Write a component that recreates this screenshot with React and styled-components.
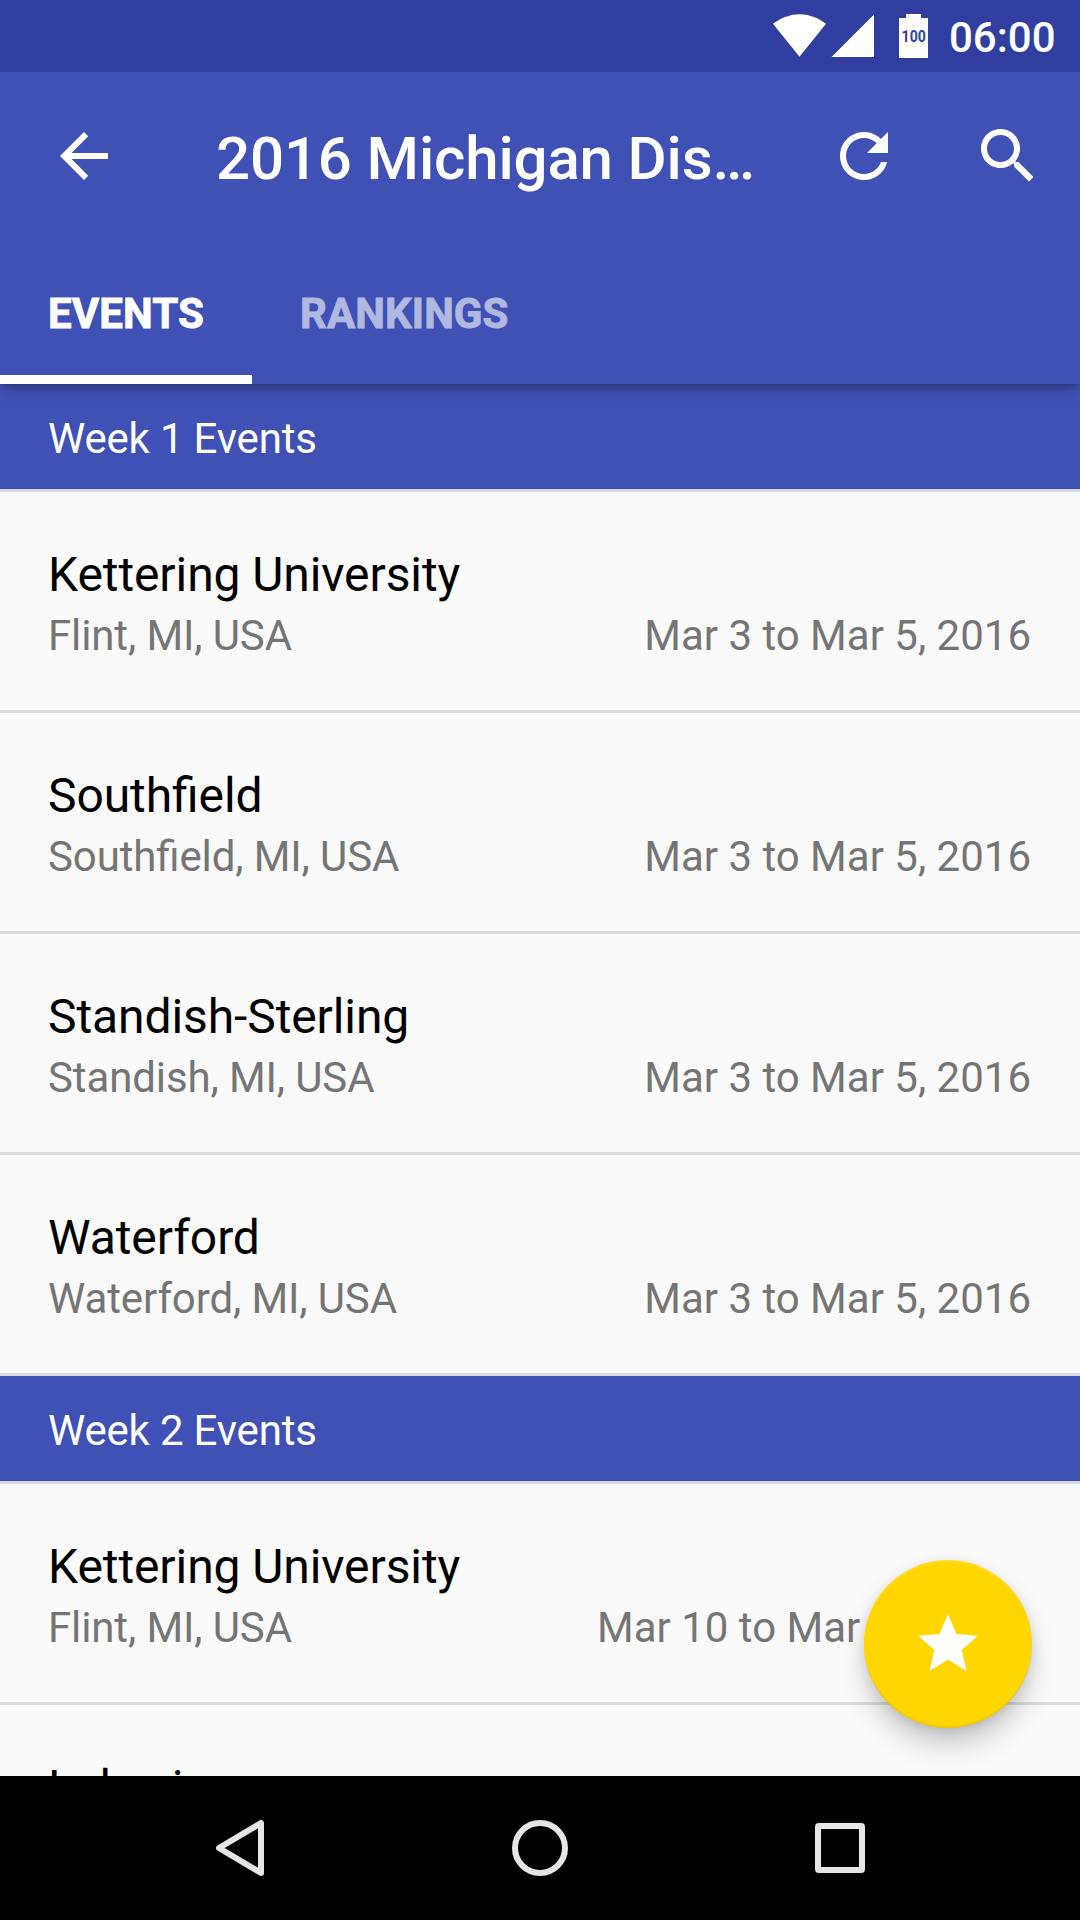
import React from "react";
import styled, { createGlobalStyle } from "styled-components";

const GlobalStyle = createGlobalStyle`
  * { box-sizing: border-box; }
  body { margin: 0; background: #fafafa; }
`;

const Screen = styled.div`
  position: relative;
  display: flex;
  flex-direction: column;
  width: 1080px;
  height: 1920px;
  overflow: hidden;
  background: #fafafa;
  font-family: Roboto, "Noto Sans", sans-serif;
  font-feature-settings: "liga" 1;
`;

const StatusBar = styled.div`
  display: flex;
  flex: none;
  justify-content: flex-end;
  height: 72px;
  padding-right: 24px;
  background: #303f9f;
  color: #fff;
`;

const StatusIcon = styled.svg`
  display: block;
  flex: none;
  width: ${(p) => p.$width}px;
  height: 72px;
  margin-right: ${(p) => p.$gap}px;
  overflow: visible;
`;

const Clock = styled.span`
  flex: none;
  width: 107px;
  padding-top: 13px;
  font-size: 42px;
  font-weight: 500;
  line-height: 49px;
  white-space: nowrap;
`;

const AppBar = styled.header`
  position: relative;
  z-index: 1;
  flex: none;
  background: #3f51b5;
  color: #fff;
  box-shadow: 0 6px 12px -2px rgba(0, 0, 0, 0.32), 0 1px 6px rgba(0, 0, 0, 0.12);
  clip-path: inset(0 0 -30px 0);
`;

const Toolbar = styled.div`
  display: flex;
  align-items: center;
  height: 168px;
  padding: 0 36px 0 48px;
`;

const Title = styled.h1`
  flex: 1;
  margin: 0;
  padding: 5px 0 0 96px;
  font-size: 60px;
  font-weight: 500;
  line-height: 70px;
  letter-spacing: -0.15px;
  white-space: nowrap;
`;

const Icon = styled.svg`
  display: block;
  flex: none;
  width: 72px;
  height: 72px;
  fill: currentColor;
`;

const Actions = styled.div`
  display: flex;
  gap: 72px;
`;

const Tabs = styled.nav`
  display: flex;
  height: 144px;
`;

const Tab = styled.div`
  padding: 49px 48px 0;
  border-bottom: 9px solid ${(p) => (p.$active ? "#fff" : "transparent")};
  color: ${(p) => (p.$active ? "#fff" : "#b2b9e1")};
  font-size: 42px;
  font-weight: 700;
  line-height: 49px;
  letter-spacing: 0.1px;
  -webkit-text-stroke: 0.9px currentColor;
`;

const List = styled.main`
  flex: 1;
  min-height: 0;
  overflow: hidden;
`;

const WeekHeader = styled.h2`
  height: 108px;
  margin: 0;
  padding: 30px 48px 0;
  border-bottom: 3px solid #dcdcdc;
  background: #3f51b5;
  color: #fff;
  font-size: 42px;
  font-weight: 400;
  line-height: 49px;
  letter-spacing: -0.19px;
`;

const EventRow = styled.article`
  height: 221px;
  padding: 55px 48px 0;
  border-bottom: 3px solid #dcdcdc;
`;

const EventName = styled.h3`
  margin: 0 0 8px;
  color: #000;
  font-size: 48px;
  font-weight: 400;
  line-height: 56px;
  letter-spacing: -0.09px;
`;

const EventDetails = styled.div`
  display: flex;
  justify-content: space-between;
  color: #757575;
  font-size: 42px;
  line-height: 49px;
  white-space: nowrap;
`;

const Place = styled.span`
  letter-spacing: -0.12px;
`;

const Dates = styled.span`
  margin-right: 1px;
`;

const Fab = styled.button`
  position: absolute;
  right: 48px;
  bottom: 192px;
  z-index: 2;
  display: flex;
  align-items: center;
  justify-content: center;
  width: 168px;
  height: 168px;
  padding: 0;
  border: 0;
  border-radius: 50%;
  background: #ffd600;
  color: #fff;
  box-shadow: 0 18px 30px -4px rgba(0, 0, 0, 0.23), 0 2px 12px rgba(0, 0, 0, 0.1),
    inset 0 -2px 1px rgba(0, 0, 0, 0.06), inset 0 2px 1px rgba(255, 255, 255, 0.15);
`;

const NavBar = styled.footer`
  display: flex;
  flex: none;
  align-items: center;
  justify-content: space-around;
  height: 144px;
  padding: 0 90px;
  background: #000;
`;

const NavIcon = styled.svg`
  width: 72px;
  height: 72px;
  fill: none;
  stroke: #e6e6e6;
  stroke-width: 6;
  stroke-linejoin: round;
`;

const weeks = [
  {
    name: "Week 1 Events",
    events: [
      ["Kettering University", "Flint, MI, USA", "Mar 3 to Mar 5, 2016"],
      ["Southfield", "Southfield, MI, USA", "Mar 3 to Mar 5, 2016"],
      ["Standish-Sterling", "Standish, MI, USA", "Mar 3 to Mar 5, 2016"],
      ["Waterford", "Waterford, MI, USA", "Mar 3 to Mar 5, 2016"],
    ],
  },
  {
    name: "Week 2 Events",
    events: [
      ["Kettering University", "Flint, MI, USA", "Mar 10 to Mar 12, 2016"],
      ["Lakeview", "", ""],
    ],
  },
];

export default function App() {
  return (
    <Screen>
      <GlobalStyle />
      <StatusBar>
        <StatusIcon $width={54} $gap={4} viewBox="0 0 54 72">
          <path d="M0 23.800C8 17.500 17.500 14.200 26.500 14.200S45.200 17.500 53 23.800L26.500 56.700Z" fill="#fff" />
        </StatusIcon>
        <StatusIcon $width={43} $gap={25} viewBox="0 0 43 72">
          <path d="M0.500 57H43V14.500Z" fill="#fff" />
        </StatusIcon>
        <StatusIcon $width={29} $gap={21} viewBox="0 0 29 72">
          <path d="M0 18H7V14H22V18H29V58H0Z" fill="#fff" />
          <text
            x="2.600"
            y="42"
            textLength="24.300"
            lengthAdjust="spacingAndGlyphs"
            fill="#303f9f"
            fontSize="16.500"
            fontWeight="700"
          >
            100
          </text>
        </StatusIcon>
        <Clock>06:00</Clock>
      </StatusBar>
      <AppBar>
        <Toolbar>
          <Icon viewBox="0 0 24 24">
            <path d="M20 11H7.830l5.590-5.590L12 4l-8 8 8 8 1.410-1.410L7.830 13H20v-2z" />
          </Icon>
          <Title>2016 Michigan Dis…</Title>
          <Actions>
            <Icon viewBox="0 0 24 24">
              <path d="M17.650 6.350C16.200 4.900 14.210 4 12 4c-4.420 0-7.990 3.580-7.990 8s3.570 8 7.990 8c3.730 0 6.840-2.550 7.730-6h-2.080c-.82 2.330-3.040 4-5.650 4-3.310 0-6-2.690-6-6s2.690-6 6-6c1.660 0 3.140.69 4.220 1.780L13 11h7V4l-2.350 2.350z" />
            </Icon>
            <Icon viewBox="0 0 24 24">
              <path d="M15.500 14h-.79l-.28-.27C15.410 12.590 16 11.110 16 9.500 16 5.910 13.090 3 9.500 3S3 5.910 3 9.500 5.910 16 9.500 16c1.610 0 3.090-.59 4.230-1.570l.27.28v.79l5 4.990L20.490 19l-4.990-5zm-6 0C7.010 14 5 11.990 5 9.500S7.010 5 9.500 5 14 7.010 14 9.500 11.990 14 9.500 14z" />
            </Icon>
          </Actions>
        </Toolbar>
        <Tabs>
          <Tab $active>EVENTS</Tab>
          <Tab>RANKINGS</Tab>
        </Tabs>
      </AppBar>
      <List>
        {weeks.map((week) => (
          <section key={week.name}>
            <WeekHeader>{week.name}</WeekHeader>
            {week.events.map(([name, place, dates]) => (
              <EventRow key={name}>
                <EventName>{name}</EventName>
                <EventDetails>
                  <Place>{place}</Place>
                  <Dates>{dates}</Dates>
                </EventDetails>
              </EventRow>
            ))}
          </section>
        ))}
      </List>
      <Fab aria-label="Favorite">
        <Icon viewBox="0 0 24 24">
          <path d="M12 17.270L18.180 21l-1.640-7.030L22 9.240l-7.190-.61L12 2 9.190 8.630 2 9.240l5.460 4.730L5.820 21z" />
        </Icon>
      </Fab>
      <NavBar>
        <NavIcon viewBox="0 0 72 72">
          <path d="M57 11V61L15 36Z" />
        </NavIcon>
        <NavIcon viewBox="0 0 72 72">
          <circle cx="36" cy="36" r="25" />
        </NavIcon>
        <NavIcon viewBox="0 0 72 72">
          <rect x="14" y="14" width="44" height="44" rx="1" />
        </NavIcon>
      </NavBar>
    </Screen>
  );
}
